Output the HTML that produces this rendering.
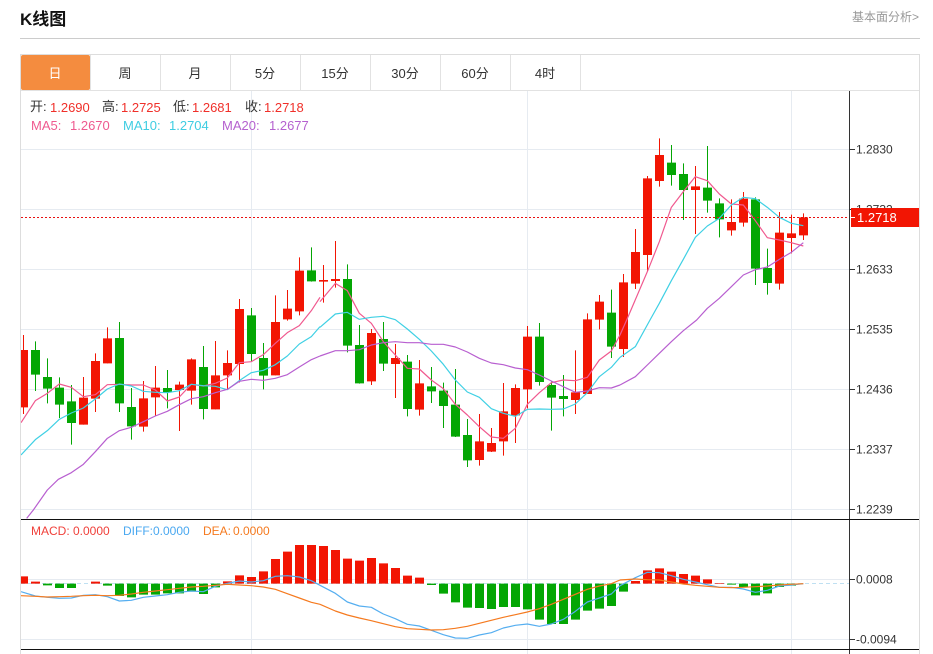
<!DOCTYPE html>
<html lang="zh">
<head>
<meta charset="utf-8">
<title>K线图</title>
<style>
html,body{margin:0;padding:0;background:#fff;width:933px;height:654px;overflow:hidden}
svg{display:block}
text{font-family:"Liberation Sans","Noto Sans CJK SC",sans-serif;font-size:13px}
.ax{font-size:12px;fill:#333}
.m{font-size:12px}
.tab{text-anchor:middle;fill:#333}
.ma{fill:none;stroke-width:3.6;stroke-linejoin:round}
</style>
</head>
<body>
<svg width="933" height="654" viewBox="0 0 933 654" xmlns="http://www.w3.org/2000/svg">
<defs><clipPath id="c"><rect x="21" y="91" width="828" height="558"/></clipPath></defs>

<!-- header -->
<text x="20" y="25" style="font-size:17px;font-weight:bold" fill="#111">K线图</text>
<text x="852" y="21" style="font-size:12px" fill="#999">基本面分析&gt;</text>
<rect x="20" y="38" width="900" height="1" fill="#ccc"/>

<!-- frame -->
<path d="M20.5 654V54.5H919.5V654" fill="none" stroke="#ddd"/>
<rect x="21" y="90" width="898" height="1" fill="#e2e2e2"/>
<rect x="21" y="55" width="69" height="35" rx="2" fill="#f48c3f"/>
<path d="M90.5 55V90M160.5 55V90M230.5 55V90M300.5 55V90M370.5 55V90M440.5 55V90M510.5 55V90M580.5 55V90" stroke="#e2e2e2"/>
<text x="55" y="78" class="tab" style="fill:#fff">日</text>
<text x="125" y="78" class="tab">周</text>
<text x="195" y="78" class="tab">月</text>
<text x="265" y="78" class="tab">5分</text>
<text x="335" y="78" class="tab">15分</text>
<text x="405" y="78" class="tab">30分</text>
<text x="475" y="78" class="tab">60分</text>
<text x="545" y="78" class="tab">4时</text>

<!-- grid -->
<path d="M21 149.5H849M21 209.5H849M21 269.5H849M21 329.5H849M21 389.5H849M21 449.5H849M21 509.5H849M21 579.5H849M21 639.5H849M251.5 91V654M527.5 91V654M791.5 91V654" stroke="#e6ebf1" fill="none"/>

<!-- MACD baseline -->
<path d="M21 583.5H849" stroke="#bfe0f2" stroke-dasharray="4 3" fill="none"/>

<g clip-path="url(#c)">
<!-- candles 0-24 -->
<g transform="translate(0,220) scale(.33333)">
<path fill="none" stroke="#f21503" stroke-width="3" d="M70.5 345V582M250.5 471V614M286.5 400V576M322.5 322V430M430.5 483V635M466.5 438V588M538.5 485V633M574.5 415V554M646.5 363V568M682.5 391V508M718.5 237V487M826.5 226V466M862.5 210V302M898.5 112V286"/>
<path fill="none" stroke="#f21503" stroke-width="27" d="M70.5 390V562M250.5 533V614M286.5 423V536M322.5 355V430M430.5 535V620M466.5 503V532M538.5 494V510M574.5 418V512M646.5 466V568M682.5 429V466M718.5 267V432M826.5 306V466M862.5 266V298M898.5 152V274"/>
<path fill="none" stroke="#04a604" stroke-width="3" d="M106.5 364V513M142.5 415V550M178.5 472V594M214.5 495V674M358.5 306V576M394.5 504V659M502.5 450V565M610.5 378V598M754.5 264V425M790.5 369V508M934.5 82V185"/>
<path fill="none" stroke="#04a604" stroke-width="27" d="M106.5 390V464M142.5 471V506M178.5 503V554M214.5 544V609M358.5 354V550M394.5 561V619M502.5 504V517M610.5 441V567M754.5 286V402M790.5 414V467M934.5 151V184"/>
</g>
<!-- candles 25-49 -->
<g transform="translate(320,220) scale(.33333)">
<path fill="none" stroke="#f21503" stroke-width="3" d="M10.5 135V248M46.5 63V203M154.5 327V495M226.5 372V534M298.5 420V587M478.5 582V737M514.5 624V696M550.5 489V707M586.5 493V669M622.5 318V565M766.5 391V582M802.5 280V522M838.5 225V328"/>
<path fill="none" stroke="#f21503" stroke-width="27" d="M10.5 180V185M46.5 177V183M154.5 339V484M226.5 414V432M298.5 490V569M478.5 664V720M514.5 669V695M550.5 574V664M586.5 504V586M622.5 350V508M766.5 517V540M802.5 298V522M838.5 245V299"/>
<path fill="none" stroke="#04a604" stroke-width="3" d="M82.5 133V397M118.5 315V491M190.5 306V453M262.5 405V589M334.5 441V549M370.5 488V624M406.5 447V651M442.5 597V741M658.5 309V497M694.5 485V632M730.5 465V589M874.5 209V414"/>
<path fill="none" stroke="#04a604" stroke-width="27" d="M82.5 177V377M118.5 375V490M190.5 357V431M262.5 425V567M334.5 499V514M370.5 512V558M406.5 554V650M442.5 645V721M658.5 350V486M694.5 495V533M730.5 528V537M874.5 278V380"/>
</g>
<!-- candles 50-65 -->
<g transform="translate(620,120) scale(.33333)">
<path fill="none" stroke="#f21503" stroke-width="3" d="M10.5 462V711M46.5 327V507M82.5 168V455M118.5 55V200M226.5 138V342M334.5 238V347M370.5 216V320M478.5 276V509M514.5 284V400M550.5 280V360"/>
<path fill="none" stroke="#f21503" stroke-width="27" d="M10.5 487V687M46.5 396V491M82.5 175V405M118.5 105V183M226.5 199V210M334.5 306V331M370.5 236V308M478.5 338V491M514.5 340V354M550.5 292V346"/>
<path fill="none" stroke="#04a604" stroke-width="3" d="M154.5 75V197M190.5 130V300M262.5 78V278M298.5 235V352M406.5 232V495M442.5 386V524"/>
<path fill="none" stroke="#04a604" stroke-width="27" d="M154.5 128V165M190.5 162V210M262.5 203V242M298.5 250V298M406.5 238V446M442.5 444V489"/>
</g>

<!-- MA lines -->
<g transform="translate(0,220) scale(.33333)">
<polyline class="ma" stroke="#f0598f" points="63,608 106,542 142,520 178,492 214,502 250,530 286,524 322,494 358,493 394,495 430,495 466,510 502,543 538,531 574,493 610,498 646,490 682,474 718,428 754,425 790,404 826,370 862,338 898,317 934,272 960,232"/>
<polyline class="ma" stroke="#3fd0e4" points="63,705 106,659 142,632 178,598 214,579 250,564 286,537 322,507 358,492 394,498 430,514 466,517 502,518 538,512 574,493 610,497 646,499 682,509 718,482 754,458 790,451 826,434 862,408 898,372 934,350 960,320"/>
<polyline class="ma" stroke="#b85fd0" points="80,895 100,870 142,810 175,778 214,758 250,733 286,695 322,655 358,632 394,622 430,605 466,588 502,574 538,554 574,536 610,530 646,518 682,508 718,484 754,478 790,481 826,475 862,464 898,441 934,419 960,408"/>
</g>
<g transform="translate(320,220) scale(.33333)">
<polyline class="ma" stroke="#f0598f" points="0,245 46,190 82,212 118,280 154,310 190,365 226,405 262,445 298,447 334,480 370,506 406,553 442,585 478,620 514,651 550,655 586,625 622,553 658,518 694,488 730,480 766,482 802,472 838,420 874,393 900,345"/>
<polyline class="ma" stroke="#3fd0e4" points="0,322 46,282 82,277 118,298 154,292 190,289 226,299 262,327 298,358 334,393 370,433 406,480 442,516 478,532 514,566 550,580 586,589 622,568 658,567 694,568 730,567 766,552 802,518 838,470 874,442 900,412"/>
<polyline class="ma" stroke="#b85fd0" points="0,408 46,392 82,392 118,389 154,375 190,368 226,365 262,368 298,368 334,373 370,373 406,381 442,396 478,415 514,429 550,434 586,444 622,449 658,465 694,483 730,500 766,517 802,513 838,503 874,504 900,495"/>
</g>
<g transform="translate(620,120) scale(.33333)">
<polyline class="ma" stroke="#f0598f" points="0,645 20,600 82,455 118,365 154,262 190,215 226,170 262,182 298,222 334,252 370,255 406,302 442,353 478,360 514,368 550,378"/>
<polyline class="ma" stroke="#3fd0e4" points="0,712 46,680 90,600 118,550 154,482 190,418 226,352 262,318 298,295 334,255 370,232 406,236 442,262 478,292 514,310 550,317"/>
<polyline class="ma" stroke="#b85fd0" points="0,795 46,770 82,735 118,700 154,665 190,632 230,600 262,565 298,535 334,500 370,465 406,449 442,441 478,418 514,397 550,368"/>
</g>

<!-- MACD bars -->
<g transform="translate(0,510) scale(.33333)" fill="none" stroke-width="27">
<path stroke="#f21503" d="M70.5 221V199M106.5 221V215M286.5 221V215M682.5 221V214M718.5 221V196M754.5 221V201M790.5 221V184M826.5 221V147M862.5 221V125M898.5 221V105M934.5 221V105"/>
<path stroke="#04a604" d="M142.5 221V226M178.5 221V234M214.5 221V234M322.5 221V227M358.5 221V258M394.5 221V262M430.5 221V254M466.5 221V254M502.5 221V250M538.5 221V250M574.5 221V245M610.5 221V252M646.5 221V232"/>
</g>
<g transform="translate(320,510) scale(.33333)" fill="none" stroke-width="27">
<path stroke="#f21503" d="M10.5 221V108M46.5 221V120M82.5 221V146M118.5 221V152M154.5 221V144M190.5 221V160M226.5 221V174M262.5 221V197M298.5 221V203"/>
<path stroke="#04a604" d="M334.5 221V225M370.5 221V251M406.5 221V277M442.5 221V293M478.5 221V294M514.5 221V297M550.5 221V291M586.5 221V291M622.5 221V298M658.5 221V329M694.5 221V342M730.5 221V342M766.5 221V329M802.5 221V302M838.5 221V296M874.5 221V288"/>
</g>
<g transform="translate(620,510) scale(.33333)" fill="none" stroke-width="27">
<path stroke="#f21503" d="M46.5 221V213M82.5 221V181M118.5 221V175M154.5 221V185M190.5 221V192M226.5 221V197M262.5 221V208M298.5 221V219"/>
<path stroke="#04a604" d="M10.5 221V245M334.5 221V224M370.5 221V232M406.5 221V256M442.5 221V250M478.5 221V231M514.5 221V227"/>
</g>

<!-- MACD lines -->
<g transform="translate(0,510) scale(.33333)">
<polyline class="ma" stroke="#55aef0" points="63,245 106,258 142,262 178,265 214,264 250,256 286,254 322,260 358,273 394,271 430,262 466,258 502,254 538,247 574,243 610,245 646,229 682,220 718,213 754,216 790,212 826,199 862,197 898,201 934,212 960,226"/>
<polyline class="ma" stroke="#f57a1f" points="63,257 106,259 142,261 178,260 214,259 250,257 286,256 322,257 358,256 394,252 430,247 466,243 502,239 538,235 574,231 610,229 646,226 682,223 718,225 754,227 790,231 826,238 862,251 898,264 934,277 960,283"/>
</g>
<g transform="translate(320,510) scale(.33333)">
<polyline class="ma" stroke="#55aef0" points="0,226 46,250 82,276 118,288 154,292 190,312 226,326 262,343 298,348 334,361 370,374 406,384 442,385 478,375 514,368 550,354 586,346 622,342 658,349 694,342 730,328 766,304 802,276 838,264 874,252 900,227"/>
<polyline class="ma" stroke="#f57a1f" points="0,283 46,303 82,315 118,324 154,332 190,341 226,350 262,356 298,358 334,360 370,359 406,355 442,349 478,340 514,331 550,322 586,314 622,306 658,296 694,283 730,268 766,253 802,238 838,228 874,221 900,210"/>
</g>
<g transform="translate(620,510) scale(.33333)">
<polyline class="ma" stroke="#55aef0" points="0,227 46,203 82,187 118,188 154,197 190,208 226,216 262,224 298,232 334,232 370,237 406,247 442,241 478,228 514,225 550,221"/>
<polyline class="ma" stroke="#f57a1f" points="0,210 46,207 82,209 118,210 154,216 190,222 226,226 262,229 298,232 334,233 370,232 406,230 442,228 478,225 514,223 550,221"/>
</g>
</g>

<!-- last price line -->
<path d="M21 217.5H849" stroke="#e81010" stroke-dasharray="2 2" fill="none"/>

<!-- axes -->
<path d="M849.5 91V654" stroke="#333" fill="none"/>
<path d="M21 519.5H919M21 649.5H919" stroke="#111" fill="none"/>
<path d="M850 149.5H855M850 209.5H855M850 269.5H855M850 329.5H855M850 389.5H855M850 449.5H855M850 509.5H855M850 579.5H855M850 639.5H855" stroke="#333" fill="none"/>
<g class="ax">
<text class="ax" x="856" y="153.500">1.2830</text>
<text class="ax" x="856" y="213.500">1.2732</text>
<text class="ax" x="856" y="273.500">1.2633</text>
<text class="ax" x="856" y="333.500">1.2535</text>
<text class="ax" x="856" y="393.500">1.2436</text>
<text class="ax" x="856" y="453.500">1.2337</text>
<text class="ax" x="856" y="513.500">1.2239</text>
<text class="ax" x="856" y="583.500">0.0008</text>
<text class="ax" x="856" y="643.500">-0.0094</text>
</g>
<rect x="851" y="208" width="68" height="19" fill="#f21503"/>
<rect x="851" y="217" width="4" height="1" fill="#fff"/>
<text x="857" y="222" style="font-size:13px" fill="#fff">1.2718</text>

<!-- legend -->
<text x="30" y="111" fill="#333">开:</text><text x="50" y="112" fill="#f0302a">1.2690</text>
<text x="102" y="111" fill="#333">高:</text><text x="121" y="112" fill="#f0302a">1.2725</text>
<text x="173" y="111" fill="#333">低:</text><text x="192" y="112" fill="#f0302a">1.2681</text>
<text x="245" y="111" fill="#333">收:</text><text x="264" y="112" fill="#f0302a">1.2718</text>
<text x="31" y="130" fill="#ef5a8f">MA5:</text><text x="70" y="130" fill="#ef5a8f">1.2670</text>
<text x="123" y="130" fill="#3fcde2">MA10:</text><text x="169" y="130" fill="#3fcde2">1.2704</text>
<text x="222" y="130" fill="#b561cf">MA20:</text><text x="269" y="130" fill="#b561cf">1.2677</text>

<text class="m" x="31" y="535" fill="#f0403a">MACD:</text><text class="m" x="73" y="535" fill="#f0403a">0.0000</text>
<text class="m" x="123" y="535" fill="#4aa8f0">DIFF:</text><text class="m" x="153" y="535" fill="#4aa8f0">0.0000</text>
<text class="m" x="203" y="535" fill="#f57a1f">DEA:</text><text class="m" x="233" y="535" fill="#f57a1f">0.0000</text>
</svg>
</body>
</html>
